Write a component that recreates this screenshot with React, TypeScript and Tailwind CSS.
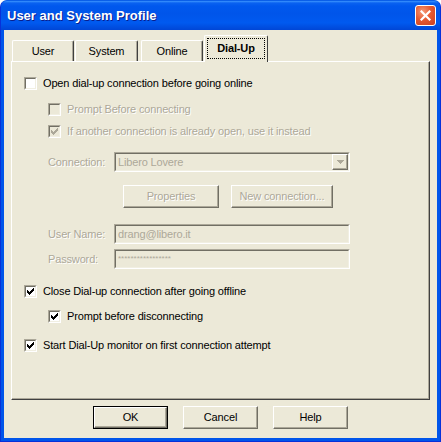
import React from "react";

const CHECK =
  "M6 0h1v1h-1z M5 1h2v1h-2z M0 2h1v1h-1z M4 2h3v1h-3z M0 3h2v1h-2z M3 3h3v1h-3z M0 4h5v1h-5z M1 5h3v1h-3z M2 6h1v1h-1z";

function CheckBox({ checked, disabled }: { checked?: boolean; disabled?: boolean }) {
  return (
    <span className="relative block w-[13px] h-[13px] shrink-0 border border-t-[#ACA899] border-l-[#ACA899] border-r-white border-b-white">
      <span
        className={
          "absolute inset-0 border border-t-[#716F64] border-l-[#716F64] border-r-[#F1EFE2] border-b-[#F1EFE2] " +
          (disabled ? "bg-[#ECE9D8]" : "bg-white")
        }
      >
        {checked && (
          <svg width="7" height="7" viewBox="0 0 7 7" className="absolute left-[1px] top-[1px]" shapeRendering="crispEdges">
            <path d={CHECK} fill={disabled ? "#ACA899" : "#000"} />
          </svg>
        )}
      </span>
    </span>
  );
}

function CheckRow({
  label,
  checked,
  disabled,
  indent,
  className,
}: {
  label: string;
  checked?: boolean;
  disabled?: boolean;
  indent?: boolean;
  className?: string;
}) {
  return (
    <div className={"flex items-center h-[13px] gap-[6px] " + (indent ? "pl-[36px] " : "pl-[12px] ") + (className ?? "")}>
      <CheckBox checked={checked} disabled={disabled} />
      <span className={"leading-[13px] whitespace-nowrap " + (disabled ? "text-[#ACA899] [text-shadow:1px_1px_0_#fff]" : "text-black")}>
        {label}
      </span>
    </div>
  );
}

function Button({ label, disabled, isDefault, className }: { label: string; disabled?: boolean; isDefault?: boolean; className?: string }) {
  return (
    <div className={"h-[23px] bg-[#ECE9D8] " + (isDefault ? "border border-black " : "") + (className ?? "")}>
      <div className="h-full w-full border border-t-white border-l-white border-r-[#716F64] border-b-[#716F64] shadow-[inset_-1px_-1px_0_#ACA899] flex items-center justify-center">
        <span className={disabled ? "text-[#ACA899] [text-shadow:1px_1px_0_#fff]" : "text-black"}>{label}</span>
      </div>
    </div>
  );
}

function Field({ children, className }: { children?: React.ReactNode; className?: string }) {
  return (
    <div className={"relative h-[20px] w-[236px] border border-t-[#ACA899] border-l-[#ACA899] border-r-white border-b-white " + (className ?? "")}>
      <div className="absolute inset-0 border border-t-[#716F64] border-l-[#716F64] border-r-[#F1EFE2] border-b-[#F1EFE2] bg-[#ECE9D8] flex items-center pl-[2px] text-[#ACA899]">
        {children}
      </div>
    </div>
  );
}

function Tab({ label, w, selected, className }: { label: string; w: string; selected?: boolean; className?: string }) {
  if (selected) {
    return (
      <div className={"relative z-10 -mb-[1px] h-[27px] bg-[#ECE9D8] border-l border-t border-l-white border-t-white border-r border-r-[#404040] rounded-t-[2px] px-[2px] pt-[2px] pb-[2px] " + w + " " + (className ?? "")}>
        <div className="h-[21px] border border-dotted border-black flex items-center justify-center font-bold text-black">
          {label}
        </div>
      </div>
    );
  }
  return (
    <div className={"h-[21px] bg-[#ECE9D8] border-l border-t border-l-white border-t-white border-r border-r-[#404040] shadow-[inset_-1px_0_0_#ACA899] rounded-t-[2px] flex items-center justify-center text-black " + w + " " + (className ?? "")}>
      {label}
    </div>
  );
}

export default function App() {
  return (
    <div className="w-[441px] h-[442px] flex flex-col rounded-t-[7px] overflow-hidden bg-[#0055EA] border border-[#0831D9] border-t-[#0A5FE8] text-[11px] tracking-[-0.15px] font-['Liberation_Sans',Arial,sans-serif]">
      {/* title bar */}
      <div className="h-[29px] shrink-0 flex items-center justify-between pl-[6px] pr-[4px] bg-[linear-gradient(to_bottom,#3C95FF_0px,#0A62F0_2px,#0058EE_5px,#0055EA_45%,#005AF0_75%,#0046D6_100%)]">
        <span className="text-white font-bold text-[13px] tracking-[0px] [text-shadow:1px_1px_0_#0A1E8C]">User and System Profile</span>
        <div className="w-[21px] h-[21px] rounded-[3px] border border-white bg-[radial-gradient(circle_at_35%_30%,#F59A78_0%,#E65A32_45%,#CC4020_100%)] flex items-center justify-center">
          <svg width="11" height="11" viewBox="0 0 11 11">
            <path d="M1.5 1.5 L9.5 9.5 M9.5 1.5 L1.5 9.5" stroke="#fff" strokeWidth="2.2" strokeLinecap="square" />
          </svg>
        </div>
      </div>

      {/* client */}
      <div className="flex-1 mx-[3px] mb-[3px] bg-[#ECE9D8] flex flex-col">
        {/* tabs */}
        <div className="mt-[5px] h-[26px] flex items-end pl-[8px]">
          <Tab label="User" w="w-[62px]" />
          <Tab label="System" w="w-[63px]" className="ml-[1px]" />
          <Tab label="Online" w="w-[62px]" className="ml-[3px]" />
          <Tab label="Dial-Up" w="w-[64px]" selected className="ml-[1px]" />
        </div>

        {/* pane */}
        <div className="ml-[7px] w-[419px] h-[339px] border border-t-white border-l-white border-r-[#404040] border-b-[#404040] shadow-[inset_-1px_-1px_0_#ACA899] flex flex-col">
          <CheckRow label="Open dial-up connection before going online" className="mt-[15px]" />
          <CheckRow label="Prompt Before connecting" disabled indent className="mt-[13px]" />
          <CheckRow label="If another connection is already open, use it instead" checked disabled indent className="mt-[9px]" />

          <div className="mt-[14px] flex items-center pl-[36px]">
            <span className="w-[66px] text-[#ACA899] [text-shadow:1px_1px_0_#fff]">Connection:</span>
            <Field>
              <span>Libero Lovere</span>
              <div className="absolute right-[0px] top-[0px] w-[16px] h-[16px] border border-t-white border-l-white border-r-[#716F64] border-b-[#716F64] shadow-[inset_-1px_-1px_0_#ACA899] bg-[#ECE9D8] flex items-center justify-center">
                <svg width="7" height="4" viewBox="0 0 7 4" shapeRendering="crispEdges">
                  <path d="M0 0h7v1h-7z M1 1h5v1h-5z M2 2h3v1h-3z M3 3h1v1h-1z" fill="#ACA899" />
                </svg>
              </div>
            </Field>
          </div>

          <div className="mt-[13px] flex pl-[111px] gap-[12px]">
            <Button label="Properties" disabled className="w-[96px]" />
            <Button label="New connection..." disabled className="w-[102px]" />
          </div>

          <div className="mt-[16px] flex items-center pl-[36px]">
            <span className="w-[66px] text-[#ACA899] [text-shadow:1px_1px_0_#fff]">User Name:</span>
            <Field>
              <span>drang@libero.it</span>
            </Field>
          </div>
          <div className="mt-[5px] flex items-center pl-[36px]">
            <span className="w-[66px] text-[#ACA899] [text-shadow:1px_1px_0_#fff]">Password:</span>
            <Field>
              <span className="text-[8px] tracking-[0px]">*****************</span>
            </Field>
          </div>

          <CheckRow label="Close Dial-up connection after going offline" checked className="mt-[16px]" />
          <CheckRow label="Prompt before disconnecting" checked indent className="mt-[12px]" />
          <CheckRow label="Start Dial-Up monitor on first connection attempt" checked className="mt-[16px]" />
        </div>

        {/* buttons */}
        <div className="mt-[6px] flex pl-[89px] gap-[15px]">
          <Button label="OK" isDefault className="w-[75px]" />
          <Button label="Cancel" className="w-[75px]" />
          <Button label="Help" className="w-[75px]" />
        </div>
      </div>
    </div>
  );
}
